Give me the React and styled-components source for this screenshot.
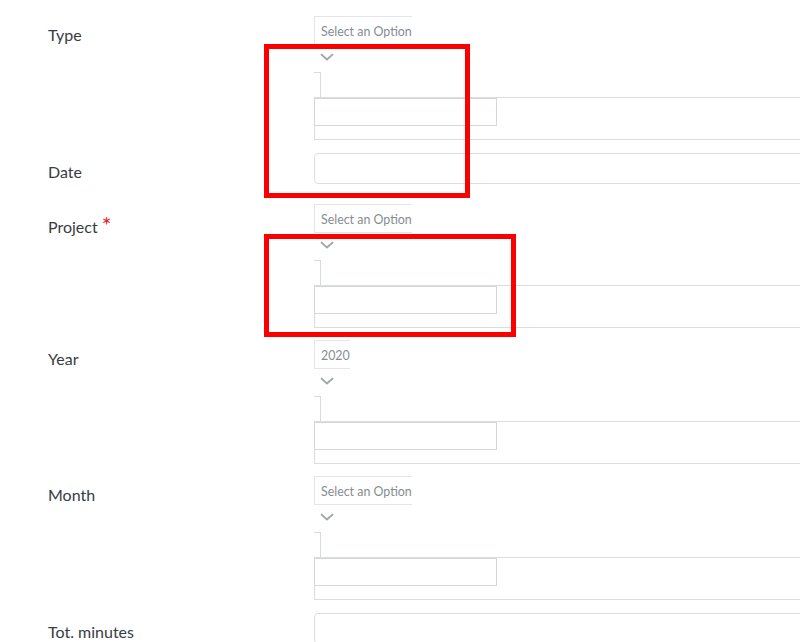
import React from "react";
import styled, { createGlobalStyle } from "styled-components";

const GlobalStyle = createGlobalStyle`
    html, body {
        margin: 0;
        padding: 0;
        background: #ffffff;
    }
    body {
        font-family: Lato, "Open Sans", sans-serif;
    }
`;

const Page = styled.div`
    position: relative;
    width: 800px;
    height: 642px;
    overflow: hidden;
    box-sizing: border-box;
    padding: 16px 0 0 48px;
    background: #ffffff;
`;

const Row = styled.div`
    display: grid;
    grid-template-columns: 266px 700px;
    margin-bottom: ${p => p.$space}px;
`;

const Label = styled.label`
    font-family: Lato, sans-serif;
    font-size: 16px;
    line-height: 20px;
    color: #373c42;
    padding-top: 9px;
`;

const Required = styled.span`
    display: inline-block;
    position: relative;
    top: 3px;
    color: #e3261f;
    font-size: 17px;
    line-height: 1;
    margin-left: 5px;
    vertical-align: 5px;
    transform: scale(1.4);
`;

const SelectWrap = styled.div`
    display: flex;
    flex-direction: column;
    align-items: flex-start;
`;

const Selection = styled.div`
    box-sizing: border-box;
    height: 29px;
    border: 1px solid #e3e5e8;
    border-right: none;
    padding: 2px 0 0 6px;
    white-space: nowrap;
    font-family: Lato, sans-serif;
    font-size: 12.4px;
    line-height: 25px;
    color: #858c92;
`;

const Arrow = styled.svg`
    display: block;
    margin: 8px 0 0 6px;
`;

const Tick = styled.div`
    box-sizing: border-box;
    width: 7px;
    height: 25px;
    margin-top: 11px;
    border-top: 1px solid #d8dbde;
    border-right: 1px solid #d8dbde;
`;

const DropBox = styled.div`
    box-sizing: border-box;
    width: 100%;
    height: 43px;
    border: 1px solid #dadde0;
    border-right: none;
`;

const SearchInput = styled.div`
    box-sizing: border-box;
    width: 183px;
    height: 28px;
    margin-left: -1px;
    border: 1px solid #d3d7db;
`;

const TextInput = styled.div`
    box-sizing: border-box;
    width: 100%;
    height: 31px;
    border: 1px solid #dadde1;
    border-radius: 4px;
`;

const Marker = styled.div`
    position: absolute;
    box-sizing: border-box;
    left: ${p => p.$x}px;
    top: ${p => p.$y}px;
    width: ${p => p.$w}px;
    height: ${p => p.$h}px;
    border: 5px solid #fb0000;
    pointer-events: none;
`;

function Chevron() {
    return (
        <Arrow width="14" height="8" viewBox="0 0 14 8">
            <path d="M1 1.2 L7 6.5 L13 1.2" fill="none" stroke="#9ea4aa" strokeWidth="1.8" />
        </Arrow>
    );
}

function SelectField({ value }) {
    return (
        <SelectWrap>
            <Selection>{value}</Selection>
            <Chevron />
            <Tick />
            <DropBox>
                <SearchInput />
            </DropBox>
        </SelectWrap>
    );
}

export default function App() {
    return (
        <Page>
            <GlobalStyle />
            <Row $space={13}>
                <Label>Type</Label>
                <SelectField value="Select an Option" />
            </Row>
            <Row $space={20}>
                <Label>Date</Label>
                <TextInput />
            </Row>
            <Row $space={12}>
                <Label>Project<Required>*</Required></Label>
                <SelectField value="Select an Option" />
            </Row>
            <Row $space={12}>
                <Label>Year</Label>
                <SelectField value="2020" />
            </Row>
            <Row $space={13}>
                <Label>Month</Label>
                <SelectField value="Select an Option" />
            </Row>
            <Row $space={0}>
                <Label>Tot. minutes</Label>
                <TextInput />
            </Row>
            <Marker $x={264} $y={44} $w={206} $h={154} />
            <Marker $x={264} $y={234} $w={252} $h={103} />
        </Page>
    );
}
